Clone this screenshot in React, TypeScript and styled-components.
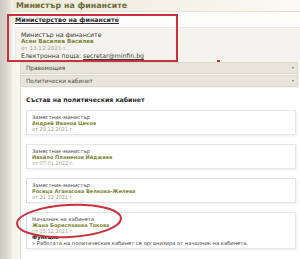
import React from "react";
import styled, { createGlobalStyle } from "styled-components";

const GlobalStyle = createGlobalStyle`
  html, body { margin: 0; padding: 0; background: #ffffff; }
  body { font-family: "DejaVu Sans", Verdana, sans-serif; overflow: hidden; }
  * { box-sizing: border-box; }
`;

const Page = styled.div`
  position: relative;
  width: 300px;
  height: 259px;
  display: flex;
  overflow: hidden;
  background: #ffffff;
`;

const LeftStrip = styled.div`
  width: 13px;
  flex: none;
  background: linear-gradient(90deg, #cdc8c0 0%, #dcd8d1 55%, #ebe8e2 85%, #f8f7f3 100%);
`;

const Main = styled.div`
  flex: 1;
  display: flex;
  flex-direction: column;
  background: #f6f5ee;
`;

const Header = styled.div`
  height: 12px;
  padding: 1px 0 0 3px;
  background: linear-gradient(90deg, #eeebd9 0%, #f3f1e5 50%, #fbfaf6 100%);
  border-bottom: 1px solid #e4e1d0;
`;

const Title = styled.div`
  font-size: 7.9px;
  font-weight: bold;
  line-height: 9px;
  color: #6f6b3e;
`;

const TopArea = styled.div`
  background: #fdfdfb;
  padding: 4px 0 0 2px;
`;

const MinistryLink = styled.div`
  font-size: 6.3px;
  font-weight: bold;
  line-height: 8px;
  color: #2d2d2d;
  text-decoration: underline;
  height: 11px;
`;

const InfoBox = styled.div`
  background: #f4f3ee;
  border-top: 1px solid #ebe9e1;
  border-left: 1px solid #ebe9e1;
  padding: 3px 0 2px 5px;
  height: 34px;
`;

const Line = styled.div<{ $tone?: "name" | "date" | "text" }>`
  font-size: ${(p) => (p.$tone === "text" || !p.$tone ? "6.2px" : "5.6px")};
  line-height: 7px;
  font-weight: ${(p) => (p.$tone === "name" ? "bold" : "normal")};
  color: ${(p) =>
    p.$tone === "name" ? "#7c8536" : p.$tone === "date" ? "#a3a38a" : "#3a3a3a"};
  white-space: nowrap;
`;

const Mail = styled.span`
  text-decoration: underline;
`;

const Sections = styled.div`
  display: flex;
  flex-direction: column;
  padding-left: 7px;
  padding-top: 1px;
  flex: 1;
`;

const Bar = styled.div`
  height: 12px;
  margin-right: 2px;
  margin-bottom: 1px;
  background: #e8e6da;
  border: 1px solid #dcdacb;
  display: flex;
  align-items: center;
  justify-content: space-between;
  padding: 0 3px 0 5px;
  font-size: 5.8px;
  color: #4a4a42;
`;

const Arrow = styled.span`
  width: 0;
  height: 0;
  border-left: 1.5px solid transparent;
  border-right: 1.5px solid transparent;
  border-top: 2px solid #777;
`;

const Panel = styled.div`
  flex: 1;
  background: #ffffff;
  border-left: 1px solid #dddcd4;
  padding: 8px 4px 0 5px;
  display: flex;
  flex-direction: column;
  gap: 9px;
`;

const PanelTitle = styled.div`
  font-size: 6.2px;
  font-weight: bold;
  line-height: 8px;
  color: #2b2b2b;
  margin-bottom: -3px;
`;

const Card = styled.div`
  background: #ffffff;
  border: 1px solid #e6e6e2;
  border-left-color: #d8dadf;
  box-shadow: 1px 1px 2px rgba(0, 0, 0, 0.07);
  padding: 3px 5px 2px 5px;
`;

const CardLine = styled.div<{ $tone?: "name" | "date" | "text" | "head" }>`
  font-size: ${(p) => (p.$tone === "name" || p.$tone === "date" ? "5px" : "5.2px")};
  line-height: 6px;
  font-weight: ${(p) => (p.$tone === "name" || p.$tone === "head" ? "bold" : "normal")};
  color: ${(p) =>
    p.$tone === "name"
      ? "#7c8536"
      : p.$tone === "date"
      ? "#a3a38a"
      : p.$tone === "head"
      ? "#222"
      : "#3c3c3c"};
  white-space: nowrap;
`;

const RedBox = styled.div`
  position: absolute;
  left: 7px;
  top: 14px;
  width: 171px;
  height: 48px;
  border: 2px solid #c9323d;
  pointer-events: none;
`;

const RedDot = styled.div`
  position: absolute;
  left: 217px;
  top: 60px;
  width: 3px;
  height: 2px;
  background: #c9323d;
`;

const Oval = styled.svg`
  position: absolute;
  left: 14px;
  top: 203px;
  pointer-events: none;
`;

const members = [
  { role: "Заместник-министър", name: "Андрей Иванов Цеков", date: "от 29.12.2021 г." },
  { role: "Заместник-министър", name: "Ивайло Пламенов Ййджиев", date: "от 07.01.2022 г." },
  { role: "Заместник-министър", name: "Росица Атанасова Велкова-Желева", date: "от 21.12.2021 г." },
];

export default function App() {
  return (
    <>
      <GlobalStyle />
      <Page>
        <LeftStrip />
        <Main>
          <Header>
            <Title>Министър на финансите</Title>
          </Header>
          <TopArea>
            <MinistryLink>Министерство на финансите</MinistryLink>
            <InfoBox>
              <Line>Министър на финансите</Line>
              <Line $tone="name">Асен Василев Василев</Line>
              <Line $tone="date">от 13.12.2021 г.</Line>
              <Line>
                Електронна поща: <Mail>secretar@minfin.bg</Mail>
              </Line>
            </InfoBox>
          </TopArea>
          <Sections>
            <Bar>
              Правомощия
              <Arrow />
            </Bar>
            <Bar>
              Политически кабинет
              <Arrow />
            </Bar>
            <Panel>
              <PanelTitle>Състав на политическия кабинет</PanelTitle>
              {members.map((m) => (
                <Card key={m.name}>
                  <CardLine>{m.role}</CardLine>
                  <CardLine $tone="name">{m.name}</CardLine>
                  <CardLine $tone="date">{m.date}</CardLine>
                </Card>
              ))}
              <Card>
                <CardLine>Началник на кабинета</CardLine>
                <CardLine $tone="name">Жана Бориславова Токова</CardLine>
                <CardLine $tone="date">от 15.12.2021 г.</CardLine>
                <CardLine $tone="head">Функции</CardLine>
                <CardLine>» Работата на политическия кабинет се организира от началник на кабинета.</CardLine>
              </Card>
            </Panel>
          </Sections>
        </Main>
        <RedBox />
        <RedDot />
        <Oval width="110" height="38" viewBox="0 0 110 38">
          <ellipse cx="55" cy="18" rx="52" ry="16" fill="none" stroke="#c9323d" strokeWidth="2" transform="rotate(-3 55 18)" />
        </Oval>
      </Page>
    </>
  );
}
